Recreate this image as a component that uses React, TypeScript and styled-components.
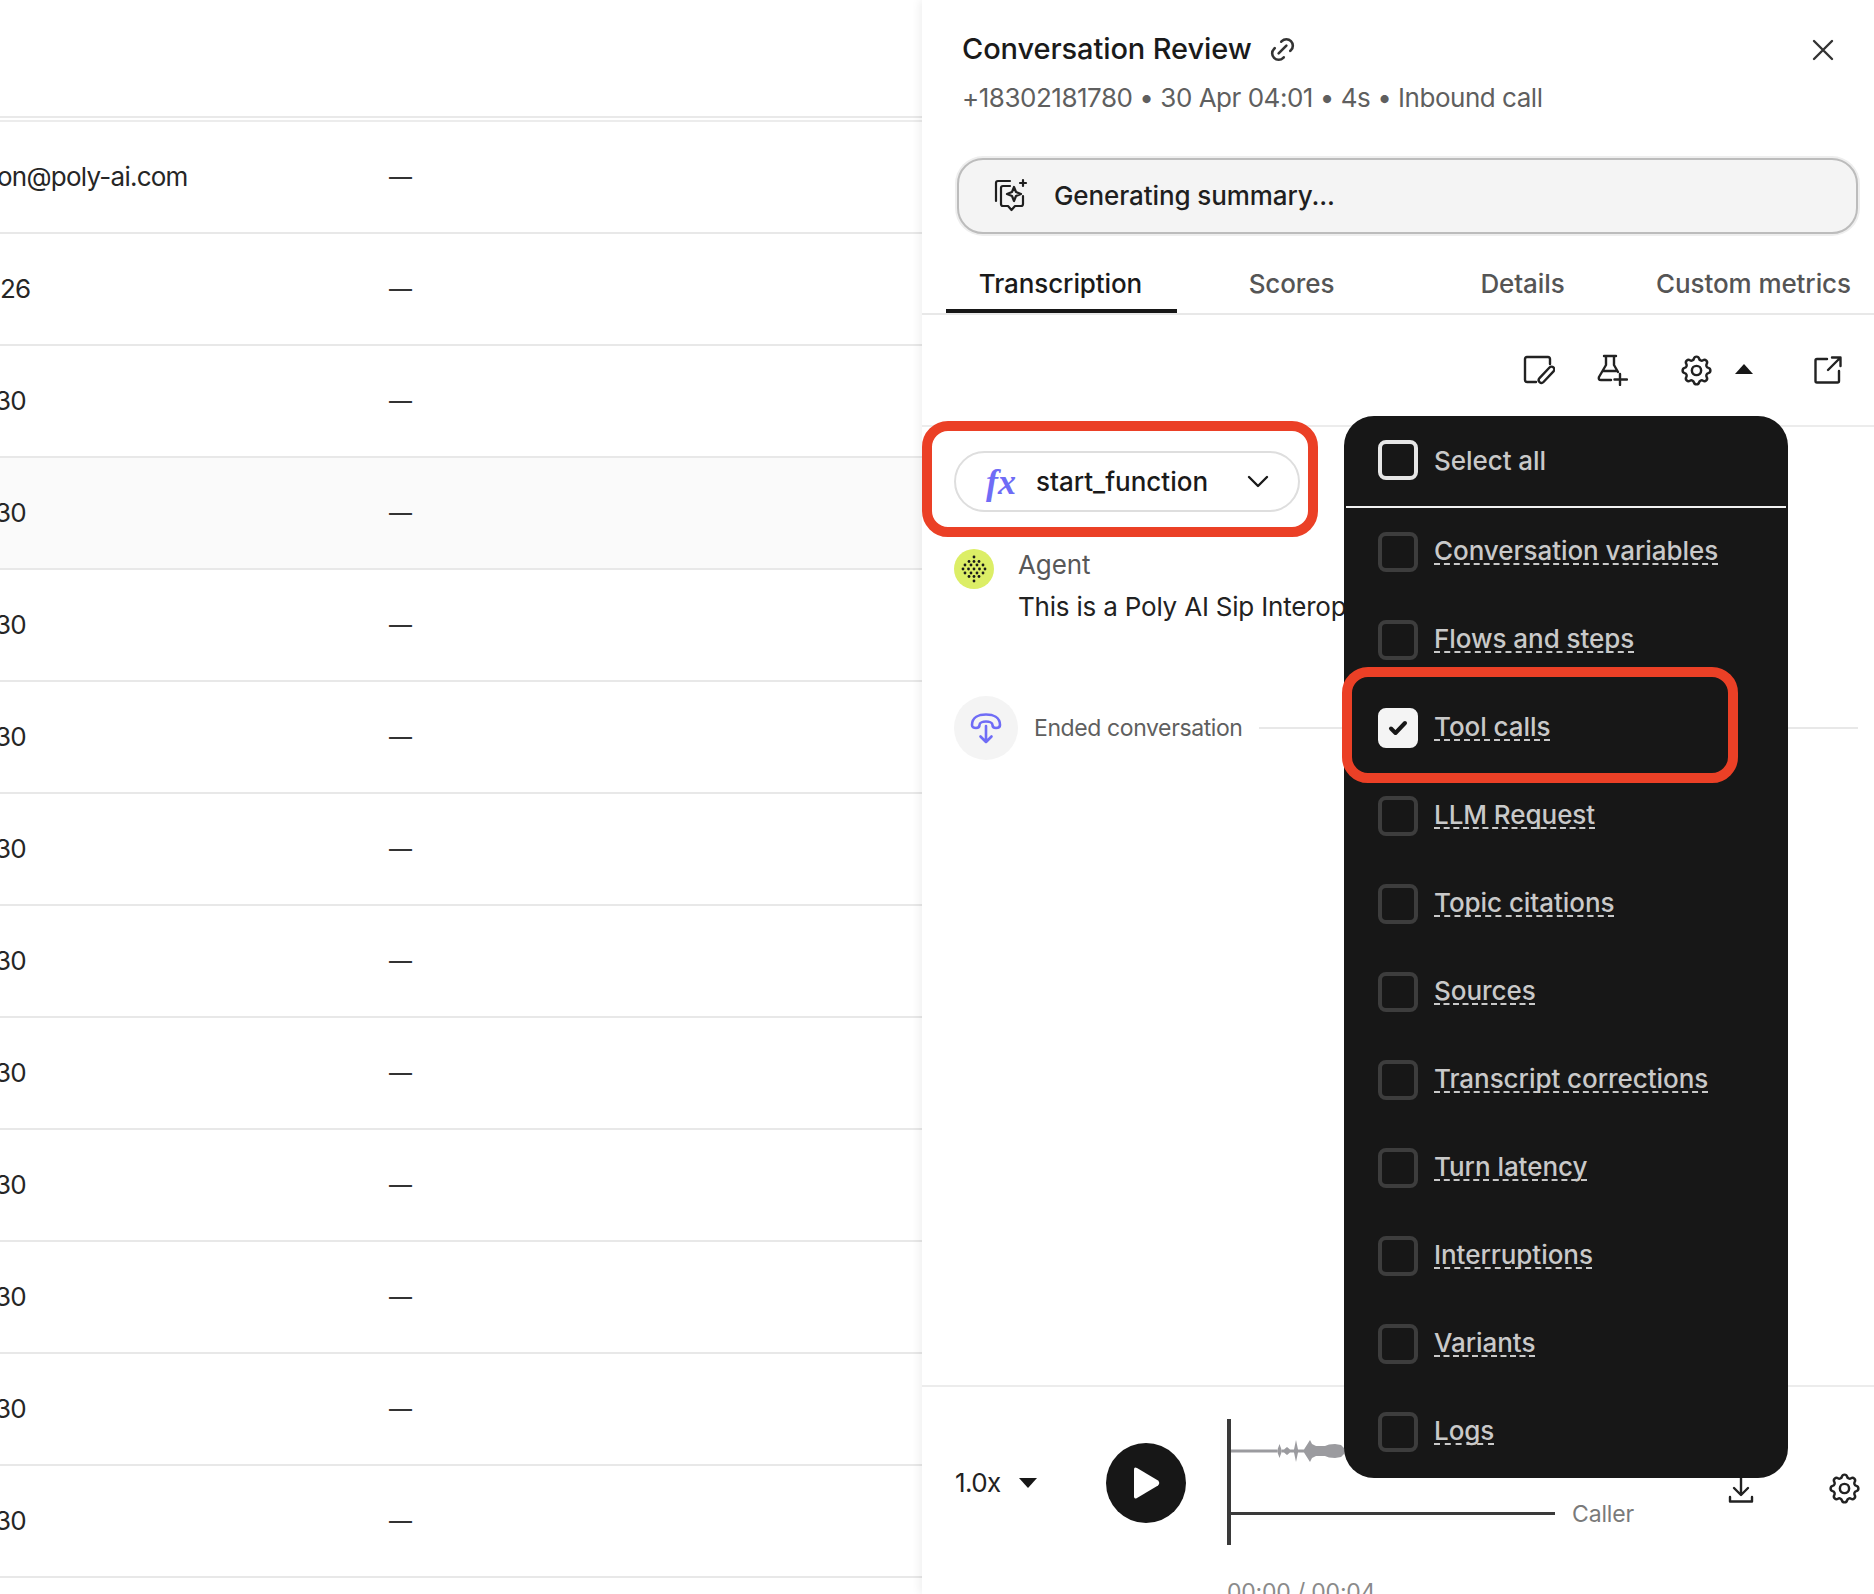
import styled, { createGlobalStyle } from 'styled-components';
import { TbLink, TbSettings } from 'react-icons/tb';

const GlobalStyle = createGlobalStyle`
  html, body {
    margin: 0;
    padding: 0;
    background: #fff;
    overflow: hidden;
  }
  * {
    box-sizing: border-box;
  }
  body {
    font-family: Inter, "Liberation Sans", sans-serif;
    color: #1a1a1a;
  }
`;

const Page = styled.div`
  display: flex;
  width: 1874px;
  height: 1594px;
  overflow: hidden;
`;

const TablePane = styled.div`
  width: 922px;
  flex-shrink: 0;
  overflow: hidden;
`;

const TableHead = styled.div`
  height: 118px;
  border-bottom: 2px solid #e9e9e9;
  margin-bottom: 2px;
`;

const TableBody = styled.div`
  border-top: 2px solid #ececec;
`;

const Row = styled.div<{ $active?: boolean }>`
  display: flex;
  align-items: center;
  height: 112px;
  padding-bottom: 2px;
  border-bottom: 2px solid #e8e8e8;
  background: ${({ $active }) => ($active ? '#fafafa' : '#fff')};
  font-size: 26px;
  letter-spacing: -0.75px;
  color: #262626;
`;

const ValueCell = styled.div`
  width: 389px;
  flex-shrink: 0;
  overflow: hidden;
  white-space: nowrap;
`;

const Value = styled.span<{ $shift: number }>`
  display: block;
  margin-left: ${({ $shift }) => -$shift}px;
`;

const DashCell = styled.div`
  font-size: 23px;
  letter-spacing: 0;
  color: #333;
  padding-top: 2px;
`;

const Panel = styled.div`
  position: relative;
  flex: 1;
  display: flex;
  flex-direction: column;
  height: 1594px;
  overflow: hidden;
  background: #fff;
  box-shadow: -3px 0 8px rgba(0, 0, 0, 0.06);
`;

const Header = styled.div`
  position: relative;
  padding: 32px 36px 0 40px;
`;

const TitleRow = styled.div`
  display: flex;
  align-items: center;
  gap: 15px;
  height: 34px;
`;

const Title = styled.h1`
  margin: 0;
  font-size: 29px;
  line-height: 34px;
  font-weight: 500;
  letter-spacing: -0.1px;
  color: #1a1a1a;
`;

const LinkIcon = styled.span`
  display: flex;
  color: #333;
  font-size: 31px;
`;

const CloseButton = styled.span`
  position: absolute;
  right: 39px;
  top: 38px;
  display: flex;
  color: #333;
`;

const Subtitle = styled.div`
  margin-top: 15px;
  font-size: 26px;
  line-height: 34px;
  letter-spacing: -0.48px;
  color: #5f5f5f;
`;

const SummaryBanner = styled.div`
  display: flex;
  align-items: center;
  gap: 25px;
  width: 901px;
  height: 76px;
  margin: 43px 0 0 35px;
  padding: 0 0 2px 34px;
  background: #f4f4f4;
  border: 2px solid #bcbcbc;
  border-radius: 26px;
  box-shadow: 0 0 0 2px #eeeeee;
  font-size: 26px;
  font-weight: 500;
  letter-spacing: -0.1px;
  color: #1f1f1f;
`;

const Tabs = styled.div`
  display: flex;
  height: 81px;
  padding-left: 24px;
  border-bottom: 2px solid #e8e8e8;
`;

const Tab = styled.div<{ $active?: boolean }>`
  width: 231px;
  display: flex;
  align-items: center;
  justify-content: center;
  padding: 24px 2px 0 0;
  height: 79px;
  font-size: 26px;
  font-weight: 500;
  letter-spacing: -0.1px;
  white-space: nowrap;
  color: ${({ $active }) => ($active ? '#1a1a1a' : '#555')};
  border-bottom: 4px solid ${({ $active }) => ($active ? '#171717' : 'transparent')};
`;

const Toolbar = styled.div`
  display: flex;
  align-items: center;
  justify-content: flex-end;
  height: 112px;
  padding-right: 32px;
  border-bottom: 2px solid #ececec;
  color: #222;
`;

const ToolIcon = styled.span<{ $gap: number }>`
  display: flex;
  margin-left: ${({ $gap }) => $gap}px;
`;

const CaretUp = styled.span`
  width: 0;
  height: 0;
  margin-left: 20px;
  margin-top: -2px;
  border-left: 9px solid transparent;
  border-right: 9px solid transparent;
  border-bottom: 10px solid #171717;
`;

const Transcript = styled.div`
  flex: 1;
  padding: 24px 0 0 32px;
`;

const FunctionPill = styled.div`
  display: flex;
  align-items: center;
  width: 346px;
  height: 61px;
  padding-left: 30px;
  border: 2px solid #dedede;
  border-radius: 31px;
`;

const FxMark = styled.span`
  width: 50px;
  font-family: "Liberation Serif", serif;
  font-style: italic;
  font-weight: 700;
  font-size: 36px;
  line-height: 1;
  color: #6f6cf6;
`;

const FunctionName = styled.span`
  width: 211px;
  font-size: 26px;
  font-weight: 500;
  letter-spacing: 0;
  color: #1a1a1a;
`;

const Message = styled.div`
  display: flex;
  gap: 24px;
  margin-top: 37px;
`;

const Avatar = styled.div`
  width: 40px;
  height: 40px;
  border-radius: 50%;
  background: #dcee66;
  flex-shrink: 0;
  display: flex;
  align-items: center;
  justify-content: center;
`;

const MessageBody = styled.div`
  white-space: nowrap;
`;

const Speaker = styled.div`
  font-size: 26px;
  line-height: 32px;
  letter-spacing: -0.1px;
  color: #585858;
`;

const MessageText = styled.div`
  margin-top: 10px;
  font-size: 26px;
  line-height: 32px;
  letter-spacing: -0.2px;
  color: #222;
`;

const EventRow = styled.div`
  display: flex;
  align-items: center;
  gap: 16px;
  margin-top: 73px;
  padding-right: 16px;
`;

const EventBadge = styled.div`
  width: 64px;
  height: 64px;
  border-radius: 50%;
  background: #f4f4f4;
  flex-shrink: 0;
  display: flex;
  align-items: center;
  justify-content: center;
`;

const EventLabel = styled.span`
  font-size: 23px;
  letter-spacing: -0.4px;
  color: #5f5f5f;
  white-space: nowrap;
`;

const EventLine = styled.span`
  flex: 1;
  height: 2px;
  background: #e8e8e8;
`;

const Player = styled.div`
  position: relative;
  display: flex;
  align-items: flex-start;
  height: 209px;
  flex-shrink: 0;
  padding: 32px 11px 0 33px;
  border-top: 2px solid #ececec;
`;

const SpeedControl = styled.div`
  display: flex;
  align-items: center;
  gap: 18px;
  width: 151px;
  height: 126px;
  font-size: 26px;
  letter-spacing: -0.6px;
  color: #222;
`;

const CaretDown = styled.span`
  width: 0;
  height: 0;
  margin-top: 2px;
  border-left: 9px solid transparent;
  border-right: 9px solid transparent;
  border-top: 10px solid #171717;
`;

const PlayButton = styled.div`
  width: 80px;
  height: 80px;
  margin-top: 24px;
  flex-shrink: 0;
  border-radius: 50%;
  background: #171717;
  display: flex;
  align-items: center;
  justify-content: center;
`;

const WaveColumn = styled.div`
  margin-left: 41px;
`;

const Track = styled.div`
  display: flex;
  align-items: center;
  gap: 17px;
  height: 63px;
  border-left: 4px solid #3a3a3a;
`;

const TrackLine = styled.div`
  width: 324px;
  height: 3px;
  background: #3a3a3a;
`;

const TrackLabel = styled.span`
  font-size: 23px;
  letter-spacing: -0.15px;
  color: #7a7a7a;
`;

const Timestamp = styled.div`
  margin-top: 32px;
  font-size: 23px;
  line-height: 30px;
  letter-spacing: -0.2px;
  color: #8a8a8a;
`;

const PlayerActions = styled.div`
  display: flex;
  align-items: center;
  gap: 72px;
  height: 126px;
  margin-left: auto;
  padding-top: 13px;
  color: #222;
`;

const Menu = styled.div`
  position: absolute;
  left: 422px;
  top: 416px;
  width: 444px;
  height: 1062px;
  border-radius: 30px;
  background: #171717;
  z-index: 2;
  padding: 0 2px;
`;

const MenuHead = styled.div`
  display: flex;
  align-items: center;
  gap: 16px;
  height: 92px;
  padding: 0 0 2px 32px;
  border-bottom: 2px solid #f2f2f2;
`;

const MenuItem = styled.div`
  display: flex;
  align-items: center;
  gap: 16px;
  height: 88px;
  padding-left: 32px;
`;

const Checkbox = styled.span<{ $variant: 'bright' | 'dim' | 'checked' }>`
  width: 40px;
  height: 40px;
  flex-shrink: 0;
  display: flex;
  align-items: center;
  justify-content: center;
  border-radius: 8px;
  border: 4px solid
    ${({ $variant }) =>
      $variant === 'bright' ? '#e6e6e6' : $variant === 'checked' ? '#f4f4f4' : '#3d3d3d'};
  background: ${({ $variant }) => ($variant === 'checked' ? '#f4f4f4' : 'transparent')};
`;

const MenuLabel = styled.span<{ $plain?: boolean }>`
  margin-bottom: ${({ $plain }) => ($plain ? '0' : '3px')};
  font-size: 26px;
  font-weight: 500;
  letter-spacing: -0.05px;
  color: #c9c9c9;
  white-space: nowrap;
  text-decoration: ${({ $plain }) => ($plain ? 'none' : 'underline dashed 2px #c9c9c9')};
  text-underline-offset: 3px;
  text-decoration-skip-ink: none;
`;

const Callout = styled.div<{ $left: number; $top: number }>`
  position: absolute;
  left: ${({ $left }) => $left}px;
  top: ${({ $top }) => $top}px;
  width: 396px;
  height: 116px;
  border: 10px solid #eb4026;
  border-radius: 26px;
  z-index: 3;
`;

const rows = [
  { text: 'on@poly-ai.com', shift: 3 },
  { text: '26', shift: 0 },
  ...Array.from({ length: 11 }, () => ({ text: '30', shift: 5 })),
];

const menuItems = [
  'Conversation variables',
  'Flows and steps',
  'Tool calls',
  'LLM Request',
  'Topic citations',
  'Sources',
  'Transcript corrections',
  'Turn latency',
  'Interruptions',
  'Variants',
  'Logs',
];

const stroke = {
  fill: 'none',
  stroke: 'currentColor',
  strokeWidth: 2.4,
  strokeLinecap: 'round' as const,
  strokeLinejoin: 'round' as const,
};

const CloseIcon = () => (
  <svg width="24" height="24" viewBox="0 0 24 24" {...stroke}>
    <path d="M3 3 L21 21 M21 3 L3 21" />
  </svg>
);

const SummaryIcon = () => (
  <svg width="36" height="34" viewBox="0 0 36 34" {...stroke} strokeWidth={2.2}>
    <path d="M3 23 V5 Q3 3 5 3 H17" />
    <path d="M8 26 V10 Q8 8 10 8 H17" />
    <path d="M8 26 Q8 28 10 28 H15 L18.5 32 L22 28 H28 Q30 28 30 26 V18" />
    <path d="M21 9 L23 14 L28 16 L23 18 L21 23 L19 18 L14 16 L19 14 Z" />
    <path d="M30 2 V8 M27 5 H33" />
  </svg>
);

const NoteIcon = () => (
  <svg width="32" height="30" viewBox="0 0 32 30" {...stroke}>
    <path d="M27 9 V4 Q27 2 25 2 H4 Q2 2 2 4 V25 Q2 27 4 27 H13" />
    <path d="M26.5 12.5 a2.7 2.7 0 0 1 4 3.8 L20.5 27 a2.7 2.7 0 0 1 -4 -3.8 Z" />
  </svg>
);

const FlaskIcon = () => (
  <svg width="31" height="32" viewBox="0 0 31 32" {...stroke}>
    <path d="M7 2 H19 M9 2 V11 L2 23 Q1 26 4 26 H14 M17 2 V11 L21 18 M6 17 H19" />
    <path d="M23 20 V31 M17.5 25.5 H30" />
  </svg>
);

const ShareIcon = () => (
  <svg width="28" height="28" viewBox="0 0 28 28" {...stroke}>
    <path d="M13 3 H3 Q1.5 3 1.5 4.5 V25 Q1.5 26.5 3 26.5 H23.5 Q25 26.5 25 25 V15" />
    <path d="M14 14 L26 2 M18 1.5 H26.5 V10" />
  </svg>
);

const ChevronIcon = () => (
  <svg width="22" height="14" viewBox="0 0 22 14" {...stroke}>
    <path d="M2 2 L11 11 L20 2" />
  </svg>
);

const AgentDots = () => {
  const dotRows = [
    { y: 2, xs: [14] },
    { y: 6.5, xs: [9, 14, 19] },
    { y: 10, xs: [5, 11, 17, 23] },
    { y: 14, xs: [3, 8.5, 14, 19.5, 25] },
    { y: 18, xs: [5, 11, 17, 23] },
    { y: 21.5, xs: [9, 14, 19] },
    { y: 26, xs: [14] },
  ];
  return (
    <svg width="28" height="28" viewBox="0 0 28 28" fill="#1a1a1a">
      {dotRows.map((row) =>
        row.xs.map((x) => <circle key={`${row.y}-${x}`} cx={x} cy={row.y} r="1.4" />),
      )}
    </svg>
  );
};

const HangUpIcon = () => (
  <svg width="32" height="31" viewBox="0 0 32 31" fill="none" stroke="#6f6cf6" strokeWidth="2.6" strokeLinecap="round" strokeLinejoin="round">
    <path d="M2 12 C2 4 9 1.5 16 1.5 C23 1.5 30 4 30 12 C30 14.5 28 15 26 15 C24 15 22.5 14 22.5 12 C22.5 9.5 19 8.5 16 8.5 C13 8.5 9.5 9.5 9.5 12 C9.5 14 8 15 6 15 C4 15 2 14.5 2 12 Z" />
    <path d="M16 13 V29 M10.5 23.5 L16 29 L21.5 23.5" />
  </svg>
);

const PlayGlyph = () => (
  <svg width="30" height="34" viewBox="0 0 30 34" fill="#fff">
    <path d="M3 3.5 Q3 0.5 6 2 L27 14.5 Q29.5 17 27 19.5 L6 32 Q3 33.5 3 30.5 Z" />
  </svg>
);

const CheckGlyph = () => (
  <svg width="20" height="16" viewBox="0 0 20 16" fill="none" stroke="#171717" strokeWidth="4" strokeLinecap="round" strokeLinejoin="round">
    <path d="M3 8.5 L7.5 13 L17 3" />
  </svg>
);

const Waveform = () => (
  <svg width="116" height="40" viewBox="0 0 116 40" fill="#9b9b9f">
    <rect x="0" y="18.5" width="46" height="3" />
    <path d="M46 20 L48.5 13 L51 20 L48.5 27 Z" />
    <path d="M51 18.5 H53 L56 16 L59 18.5 H63 L65 9 L67 18.5 H73 L79 9 L81 13 L85 15 L94 15 L98 13.5 L104 13 L110 14 L113 17 L114 20 L113 23 L110 26 L104 27 L98 26.5 L94 25 L85 25 L81 27 L79 31 L73 21.5 H67 L65 31 L63 21.5 H59 L56 24 L53 21.5 H51 Z" />
  </svg>
);

const DownloadIcon = () => (
  <svg width="26" height="30" viewBox="0 0 26 30" {...stroke}>
    <path d="M13 2 V20 M6 14 L13 21 L20 14" />
    <path d="M2 23 V27.5 H24 V23" />
  </svg>
);

export default function App() {
  return (
    <Page>
      <GlobalStyle />
      <TablePane>
        <TableHead />
        <TableBody>
          {rows.map((row, index) => (
            <Row key={index} $active={index === 3}>
              <ValueCell>
                <Value $shift={row.shift}>{row.text}</Value>
              </ValueCell>
              <DashCell>—</DashCell>
            </Row>
          ))}
        </TableBody>
      </TablePane>

      <Panel>
        <Header>
          <TitleRow>
            <Title>Conversation Review</Title>
            <LinkIcon>
              <TbLink />
            </LinkIcon>
          </TitleRow>
          <CloseButton>
            <CloseIcon />
          </CloseButton>
          <Subtitle>+18302181780 • 30 Apr 04:01 • 4s • Inbound call</Subtitle>
        </Header>

        <SummaryBanner>
          <SummaryIcon />
          Generating summary...
        </SummaryBanner>

        <Tabs>
          <Tab $active>Transcription</Tab>
          <Tab>Scores</Tab>
          <Tab>Details</Tab>
          <Tab>Custom metrics</Tab>
        </Tabs>

        <Toolbar>
          <ToolIcon $gap={0}>
            <NoteIcon />
          </ToolIcon>
          <ToolIcon $gap={42}>
            <FlaskIcon />
          </ToolIcon>
          <ToolIcon $gap={50}>
            <TbSettings size={37} strokeWidth={1.6} />
          </ToolIcon>
          <CaretUp />
          <ToolIcon $gap={61}>
            <ShareIcon />
          </ToolIcon>
        </Toolbar>

        <Transcript>
          <FunctionPill>
            <FxMark>fx</FxMark>
            <FunctionName>start_function</FunctionName>
            <ChevronIcon />
          </FunctionPill>

          <Message>
            <Avatar>
              <AgentDots />
            </Avatar>
            <MessageBody>
              <Speaker>Agent</Speaker>
              <MessageText>This is a Poly AI Sip Interop</MessageText>
            </MessageBody>
          </Message>

          <EventRow>
            <EventBadge>
              <HangUpIcon />
            </EventBadge>
            <EventLabel>Ended conversation</EventLabel>
            <EventLine />
          </EventRow>
        </Transcript>

        <Player>
          <SpeedControl>
            1.0x
            <CaretDown />
          </SpeedControl>
          <PlayButton>
            <PlayGlyph />
          </PlayButton>
          <WaveColumn>
            <Track>
              <Waveform />
            </Track>
            <Track>
              <TrackLine />
              <TrackLabel>Caller</TrackLabel>
            </Track>
            <Timestamp>00:00 / 00:04</Timestamp>
          </WaveColumn>
          <PlayerActions>
            <DownloadIcon />
            <TbSettings size={37} strokeWidth={1.6} />
          </PlayerActions>
        </Player>

        <Menu>
          <MenuHead>
            <Checkbox $variant="bright" />
            <MenuLabel $plain>Select all</MenuLabel>
          </MenuHead>
          {menuItems.map((item) => {
            const checked = item === 'Tool calls';
            return (
              <MenuItem key={item}>
                <Checkbox $variant={checked ? 'checked' : 'dim'}>{checked && <CheckGlyph />}</Checkbox>
                <MenuLabel>{item}</MenuLabel>
              </MenuItem>
            );
          })}
        </Menu>

        <Callout $left={0} $top={421} />
        <Callout $left={420} $top={667} />
      </Panel>
    </Page>
  );
}
